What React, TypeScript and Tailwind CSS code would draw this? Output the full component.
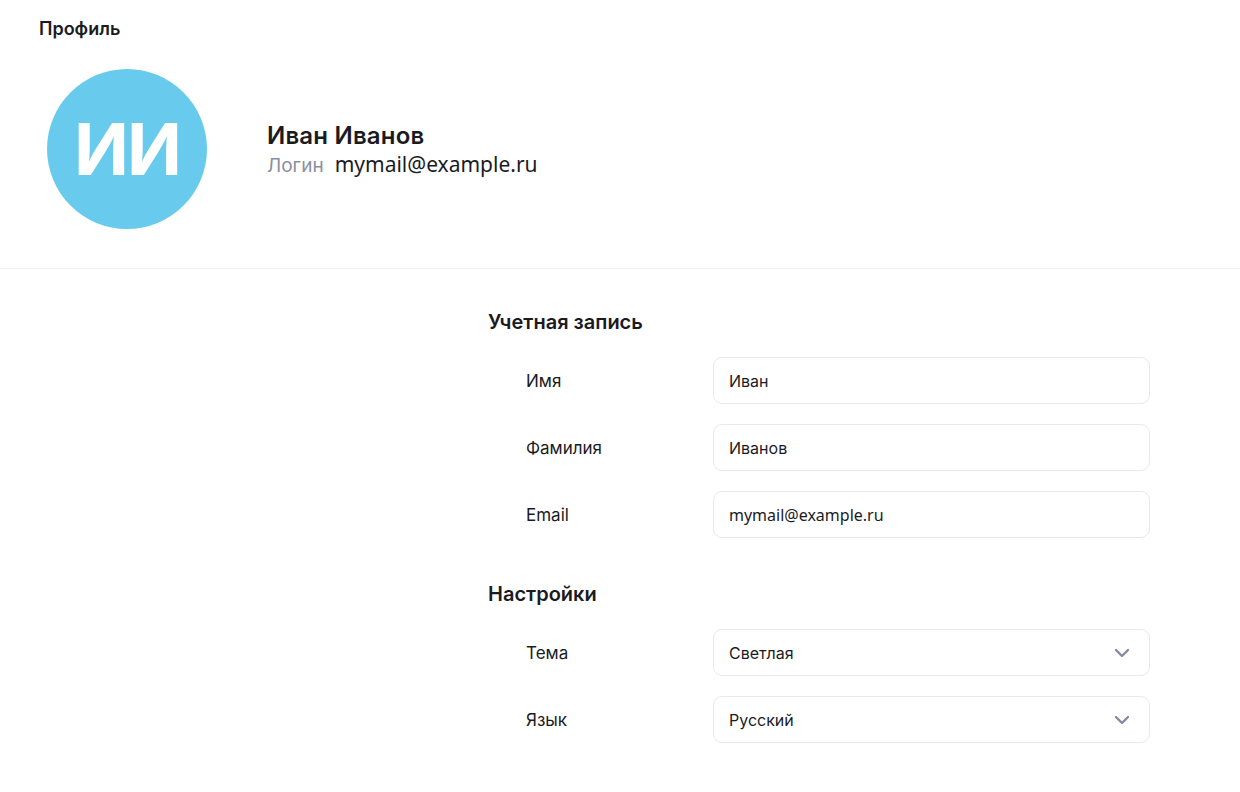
import { ChevronDown } from "lucide-react";

const font = { fontFamily: "Inter, 'Noto Sans', sans-serif" };

function Field({ label, value, mono }: { label: string; value: string; mono?: boolean }) {
  return (
    <div className="flex items-center">
      <div className="w-[225px] pl-[38px] text-[17px] leading-[24px] text-[#1b1b1f]">{label}</div>
      <div className="flex h-[47px] w-[437px] items-center rounded-[9px] border border-[#e8e8f0] bg-white px-[15px]">
        <span
          className="text-[16px] text-[#1b1b1f]"
          style={mono ? { fontFamily: "'Noto Sans', sans-serif" } : undefined}
        >
          {value}
        </span>
      </div>
    </div>
  );
}

function SelectField({ label, value }: { label: string; value: string }) {
  return (
    <div className="flex items-center">
      <div className="w-[225px] pl-[38px] text-[17px] leading-[24px] text-[#1b1b1f]">{label}</div>
      <div className="flex h-[47px] w-[437px] items-center justify-between rounded-[9px] border border-[#e8e8f0] bg-white pl-[15px] pr-[15px]">
        <span className="text-[16px] text-[#1b1b1f]">{value}</span>
        <ChevronDown className="h-[24px] w-[24px] text-[#868a9c]" strokeWidth={2.4} />
      </div>
    </div>
  );
}

export default function App() {
  return (
    <div className="min-h-screen bg-white text-[#1b1b1f]" style={font}>
      {/* Header */}
      <div className="px-[39px] pt-[17px]">
        <h1 className="text-[18px] font-semibold leading-[24px]">Профиль</h1>
      </div>

      {/* Profile card */}
      <div className="flex items-center border-b border-[#f0f0f7] pb-[39px] pl-[47px] pt-[28px]">
        <div className="flex h-[160px] w-[160px] items-center justify-center rounded-full bg-[#68cbee]">
          <span className="text-[72px] font-bold leading-none tracking-[-2px] text-white">ИИ</span>
        </div>
        <div className="ml-[60px] mt-[4px] flex flex-col">
          <div className="text-[24px] font-semibold leading-[30px] tracking-[0.2px]">Иван Иванов</div>
          <div className="-mt-[2px] flex items-baseline gap-[11px]">
            <span className="text-[19px] text-[#8b8fa0]">Логин</span>
            <span className="text-[21px]" style={{ fontFamily: "'Noto Sans', sans-serif" }}>
              mymail@example.ru
            </span>
          </div>
        </div>
      </div>

      {/* Form */}
      <div className="ml-[488px] w-[662px] pt-[40px]">
        <h2 className="mb-[22px] text-[20px] font-semibold leading-[26px]">Учетная запись</h2>
        <div className="flex flex-col gap-[20px]">
          <Field label="Имя" value="Иван" />
          <Field label="Фамилия" value="Иванов" />
          <Field label="Email" value="mymail@example.ru" mono />
        </div>

        <h2 className="mb-[22px] mt-[43px] text-[20px] font-semibold leading-[26px]">Настройки</h2>
        <div className="flex flex-col gap-[20px]">
          <SelectField label="Тема" value="Светлая" />
          <SelectField label="Язык" value="Русский" />
        </div>
      </div>
    </div>
  );
}
